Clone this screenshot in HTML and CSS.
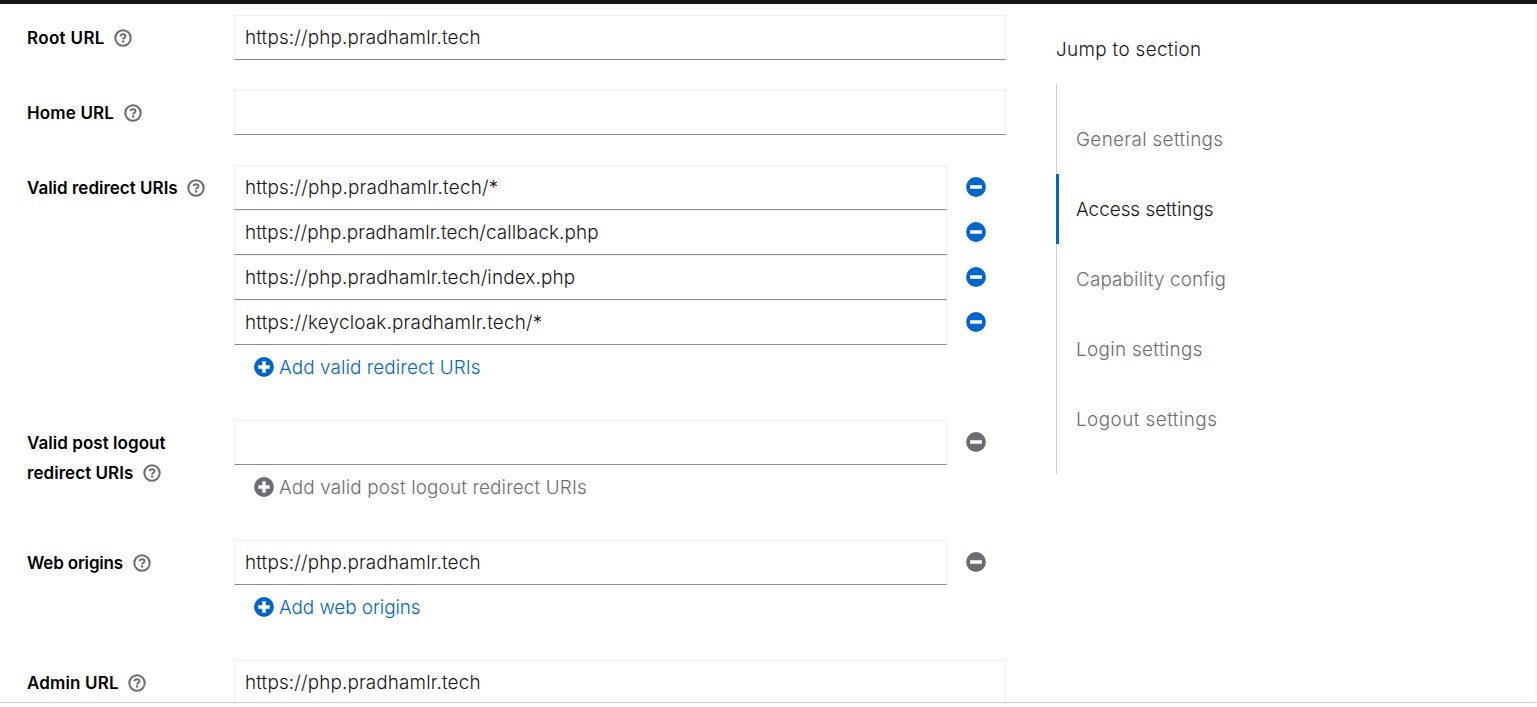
FILE: index.html
```html
<!DOCTYPE html>
<html lang="en">
<head>
<meta charset="utf-8">
<title>Client settings</title>
<link rel="stylesheet" href="styles.css">
</head>
<body>
<svg class="defs" aria-hidden="true">
  <symbol id="help" viewBox="0 0 18 18">
    <circle cx="9" cy="9" r="7.7" fill="none" stroke="currentColor" stroke-width="2"/>
    <path d="M6.3 7.1C6.7 5.8 7.7 5.3 9 5.3c1.5 0 2.5.8 2.5 1.9 0 1.7-2.4 1.6-2.4 3.2" fill="none" stroke="currentColor" stroke-width="1.9"/>
    <circle cx="9.1" cy="12.6" r="1.25" fill="currentColor"/>
  </symbol>
  <symbol id="minus" viewBox="0 0 20 20">
    <circle cx="10" cy="10" r="9.9" fill="currentColor"/>
    <rect x="4" y="8.2" width="12" height="3.5" rx=".4" fill="#fff"/>
  </symbol>
  <symbol id="plus" viewBox="0 0 20 20">
    <circle cx="10" cy="10" r="9.9" fill="currentColor"/>
    <path d="M8.3 4.3h3.4v4h4v3.4h-4v4H8.3v-4h-4V8.3h4z" fill="#fff"/>
  </symbol>
</svg>
<header class="masthead"></header>
<main class="page">
  <form class="form">
    <div class="group">
      <div class="label"><span class="ls-b">Root URL</span><svg class="help"><use href="#help"/></svg></div>
      <div class="field"><div class="input ls-3">https://php.pradhamlr.tech</div></div>
    </div>
    <div class="group">
      <div class="label"><span class="ls-3">Home URL</span><svg class="help"><use href="#help"/></svg></div>
      <div class="field"><div class="input"></div></div>
    </div>
    <div class="group">
      <div class="label"><span>Valid redirect URIs</span><svg class="help"><use href="#help"/></svg></div>
      <div class="field">
        <div class="line"><div class="input ls-4">https://php.pradhamlr.tech/*</div><span class="remove"><svg class="icon"><use href="#minus"/></svg></span></div>
        <div class="line"><div class="input ls-2">https://php.pradhamlr.tech/callback.php</div><span class="remove"><svg class="icon"><use href="#minus"/></svg></span></div>
        <div class="line"><div class="input ls-3">https://php.pradhamlr.tech/index.php</div><span class="remove"><svg class="icon"><use href="#minus"/></svg></span></div>
        <div class="line"><div class="input ls-4">https://keycloak.pradhamlr.tech/*</div><span class="remove"><svg class="icon"><use href="#minus"/></svg></span></div>
        <div class="add ls-2"><svg class="icon"><use href="#plus"/></svg><span>Add valid redirect URIs</span></div>
      </div>
    </div>
    <div class="group">
      <div class="label"><span class="ls-1">Valid post logout<br>redirect URIs</span><svg class="help"><use href="#help"/></svg></div>
      <div class="field">
        <div class="line"><div class="input"></div><span class="remove disabled"><svg class="icon"><use href="#minus"/></svg></span></div>
        <div class="add disabled ls-3"><svg class="icon"><use href="#plus"/></svg><span>Add valid post logout redirect URIs</span></div>
      </div>
    </div>
    <div class="group">
      <div class="label"><span class="ls-neg">Web origins</span><svg class="help"><use href="#help"/></svg></div>
      <div class="field">
        <div class="line"><div class="input ls-3">https://php.pradhamlr.tech</div><span class="remove disabled"><svg class="icon"><use href="#minus"/></svg></span></div>
        <div class="add ls-tight"><svg class="icon"><use href="#plus"/></svg><span>Add web origins</span></div>
      </div>
    </div>
    <div class="group">
      <div class="label"><span class="ls-3">Admin URL</span><svg class="help"><use href="#help"/></svg></div>
      <div class="field"><div class="input ls-3">https://php.pradhamlr.tech</div></div>
    </div>
  </form>
  <nav class="jump">
    <div class="jump-title ls-6">Jump to section</div>
    <ul class="jump-list">
      <li class="ls-6">General settings</li>
      <li class="current">Access settings</li>
      <li class="ls-3">Capability config</li>
      <li class="ls-6">Login settings</li>
      <li class="ls-7">Logout settings</li>
    </ul>
  </nav>
  <div class="gutter"></div>
</main>
</body>
</html>
```
FILE: styles.css
```css
* { box-sizing: border-box; }
body { margin: 0; height: 707px; overflow: hidden; background: #fff; color: #151515; font: 300 18.87px/30px Inter, "Liberation Sans", sans-serif; }
.defs { display: none; }
.masthead { height: 4px; background: #151515; }
.page { display: flex; height: 699px; overflow: hidden; border-bottom: 1px solid #d2d2d2; }
.form { flex: none; width: 1006px; padding: 11px 0 0 27px; }
.group { display: grid; grid-template-columns: 207px 1fr; margin-bottom: 30px; }
.label { padding-top: 8px; font-size: 17px; font-weight: 600; color: #000; white-space: nowrap; }
.help { width: 18px; height: 18px; margin-left: 9.5px; color: #6a6e73; vertical-align: -3px; }
.input { height: 45px; width: 100%; padding: 7px 10px 5px; border: 1px solid #f0f0f0; border-bottom-color: #8a8d90; white-space: nowrap; }
.line { display: flex; }
.line .input { flex: 1; }
.remove { width: 59px; padding: 12px 0 0 19px; color: #06c; }
.icon { display: block; width: 20px; height: 20px; }
.add { display: flex; align-items: flex-start; gap: 5px; height: 45px; padding: 8px 0 0 20px; color: #06c; }
.add .icon { margin-top: 4px; }
.remove.disabled, .add.disabled { color: #6a6e73; }
.jump { margin-left: 50px; padding-top: 31px; }
.jump-title { margin-bottom: 19px; }
.jump-list { list-style: none; margin: 0; height: 390px; padding: 20px 0; box-shadow: inset 1px 0 #d2d2d2; }
.jump-list li { height: 70px; padding: 21px 20px 19px; color: #6a6e73; }
.jump-list .current { color: #151515; box-shadow: inset 3px 0 #06c; }
.gutter { width: 3px; margin-left: auto; background: #fafafa; }
.ls-neg { letter-spacing: -.18px; }
.ls-tight { letter-spacing: -.06px; }
.ls-1 { letter-spacing: .05px; }
.ls-2 { letter-spacing: .1px; }
.ls-3 { letter-spacing: .15px; }
.ls-4 { letter-spacing: .2px; }
.ls-6 { letter-spacing: .34px; }
.ls-7 { letter-spacing: .46px; }
.ls-b { letter-spacing: .34px; }
```
